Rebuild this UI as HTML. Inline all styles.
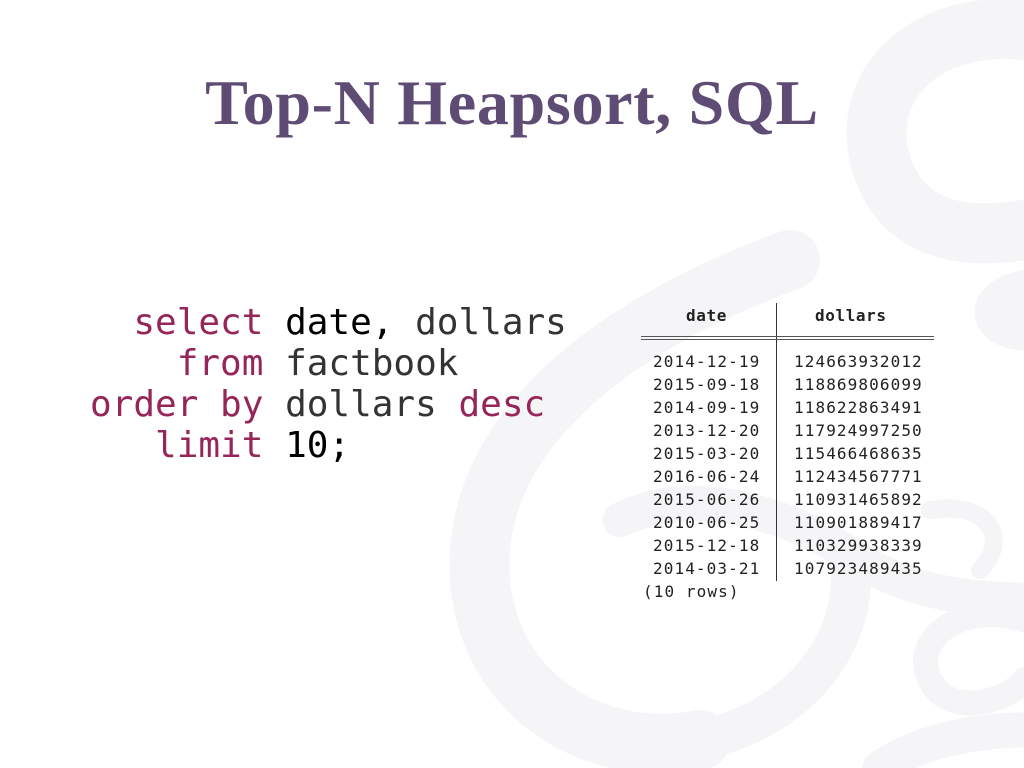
<!DOCTYPE html>
<html><head><meta charset="utf-8"><style>
html,body{margin:0;padding:0;}
body{width:1024px;height:768px;position:relative;overflow:hidden;background:#fff;}
svg.bg{position:absolute;left:0;top:0;}
.title{position:absolute;left:0;width:1024px;top:66px;text-align:center;font-family:"Liberation Serif","DejaVu Serif",serif;font-weight:bold;font-size:64px;color:#5f4c75;white-space:nowrap;letter-spacing:0.7px;}
.code{position:absolute;left:90px;top:302px;font-family:"DejaVu Sans Mono","Liberation Mono",monospace;font-size:36px;line-height:41px;white-space:pre;color:#333;}
.k{color:#96265a;}
.b{color:#000;}
.t{position:absolute;font-family:"DejaVu Sans Mono","Liberation Mono",monospace;font-size:16px;letter-spacing:1.1px;color:#222;white-space:pre;line-height:23px;}
</style></head><body>
<svg class="bg" width="1024" height="768" viewBox="0 0 1024 768">
<g fill="none" stroke="#f5f5f7" stroke-linecap="round">
<path d="M1024 30 C930 20 860 80 880 160 C900 230 960 240 1024 230" stroke-width="60"/>
<path d="M1024 290 C980 300 990 330 1024 330" stroke-width="40"/>
<path d="M790 260 C600 330 470 440 480 580 C490 700 600 760 700 740" stroke-width="60"/>
<path d="M700 740 C800 720 860 640 850 560" stroke-width="40"/>
<path d="M620 520 C700 480 800 520 860 560 C920 600 1000 600 1024 600" stroke-width="35"/>
<path d="M930 510 C990 500 1010 540 980 570" stroke-width="18"/>
<path d="M1024 620 C960 600 910 640 930 680 C950 720 1010 700 1024 680" stroke-width="25"/>
<path d="M880 768 C920 740 980 730 1024 730" stroke-width="35"/>
</g>
</svg>
<div class="title">Top-N Heapsort, SQL</div>
<div class="code"><span class="k">  select</span> <span class="b">date,</span> dollars
<span class="k">    from</span> factbook
<span class="k">order by</span> dollars <span class="k">desc</span>
<span class="k">   limit</span> <span class="b">10;</span></div>
<div class="t" style="left:686px;top:304px;font-weight:bold;letter-spacing:0.6px;">date</div>
<div class="t" style="left:815px;top:304px;font-weight:bold;letter-spacing:0.6px;">dollars</div>
<div style="position:absolute;left:776px;top:303px;width:1px;height:278px;background:#333;"></div>
<div style="position:absolute;left:641px;top:336px;width:293px;height:1px;background:#555;"></div>
<div style="position:absolute;left:641px;top:339px;width:293px;height:1px;background:#555;"></div>
<div class="t" style="left:653px;top:350px;">2014-12-19
2015-09-18
2014-09-19
2013-12-20
2015-03-20
2016-06-24
2015-06-26
2010-06-25
2015-12-18
2014-03-21</div>
<div class="t" style="left:794px;top:350px;">124663932012
118869806099
118622863491
117924997250
115466468635
112434567771
110931465892
110901889417
110329938339
107923489435</div>
<div class="t" style="left:643px;top:580px;">(10 rows)</div>
</body></html>
